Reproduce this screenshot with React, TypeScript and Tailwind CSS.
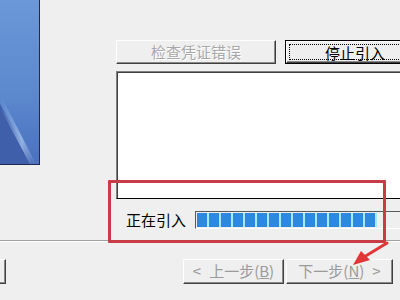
import React from "react";

const font = { fontFamily: '"Noto Sans CJK SC", "Noto Sans", sans-serif' };

function WinButton({ children, className = "" }: { children?: React.ReactNode; className?: string }) {
    return <div className={"flex items-center justify-center whitespace-nowrap bg-[#efefef] border border-t-white border-l-white border-r-[#404040] border-b-[#404040] shadow-[inset_-1px_-1px_0_#8a8a8a] " + className}>
        {children}
    </div>;
}

function SideArt() {
    return <svg width="40" height="165" viewBox="0 0 40 165" className="shrink-0 block">
        <defs>
            <linearGradient id="sky" x1="0" y1="0" x2="0" y2="1">
                <stop offset="0" stopColor="#6b98d8" />
                <stop offset="0.6" stopColor="#5b87cd" />
                <stop offset="1" stopColor="#4a70bf" />
            </linearGradient>
            <linearGradient id="glow" x1="0" y1="0" x2="1" y2="0">
                <stop offset="0" stopColor="#9fbfea" stopOpacity="0" />
                <stop offset="0.6" stopColor="#a9c6ee" stopOpacity="0.75" />
                <stop offset="1" stopColor="#9fbfea" stopOpacity="0" />
            </linearGradient>
        </defs>
        <rect width="40" height="165" fill="url(#sky)" />
        <polygon points="0,104 34,164 0,164" fill="#3f5fab" />
        <polygon points="0,92 2,98 36,164 30,164 0,108" fill="url(#glow)" />
        <rect x="39" y="0" width="1" height="165" fill="#1e2a55" />
        <rect x="0" y="164" width="40" height="1" fill="#1e2a55" />
    </svg>;
}

function Progress() {
    const blocks = Array.from({ length: 15 });
    return <div className="h-[18px] w-[220px] shrink-0 border border-t-[#5a5a5a] border-l-[#5a5a5a] border-b-white border-r-white bg-[#efefef] flex items-center gap-[2px] px-[1px]">
        {blocks.map((_, i) => <div key={i} className="w-[10px] h-[14px] bg-[#2d88e0] shadow-[2px_0_0_#a6e6f6]" />)}
    </div>;
}

export default function App() {
    return <div style={font} className="relative w-[400px] h-[300px] overflow-hidden bg-[#efefef] flex flex-col">
        <div className="h-[240px] flex flex-row shrink-0">
            <SideArt />
            <div className="ml-[76px] pt-[40px] flex flex-col shrink-0">
                <div className="flex flex-row gap-[9px]">
                    <WinButton className="w-[160px] h-[24px] text-[15px] text-[#a8a8a8] [text-shadow:1px_1px_0_#ffffff]">检查凭证错误</WinButton>
                    <div className="w-[140px] h-[24px] border border-black shrink-0">
                        <WinButton className="w-full h-full p-[2px]">
                            <div className="w-full h-full border border-dotted border-black flex items-center justify-center text-[15px] text-black leading-none">停止引入</div>
                        </WinButton>
                    </div>
                </div>
                <div className="mt-[7px] h-[128px] w-[300px] bg-white border border-t-[#808080] border-l-[#808080] shadow-[inset_1px_1px_0_#404040]" />
                <div className="mt-[12px] flex flex-row items-center">
                    <span className="ml-[10px] w-[69px] text-[15px] text-black leading-[18px] whitespace-nowrap">正在引入</span>
                    <Progress />
                </div>
            </div>
        </div>
        <div className="h-[2px] border-t border-t-[#a0a0a0] border-b border-b-white shrink-0" />
        <div className="mt-[17px] flex flex-row text-[15px] text-[#9a9a9a]">
            <WinButton className="-ml-[94px] w-[100px] h-[25px] shrink-0" />
            <WinButton className="ml-[177px] w-[101px] h-[25px] shrink-0 gap-[8px]">
                <span>&lt;</span><span>上一步(<span className="underline">B</span>)</span>
            </WinButton>
            <WinButton className="ml-[2px] w-[107px] h-[25px] shrink-0 gap-[8px]">
                <span>下一步(<span className="underline">N</span>)</span><span>&gt;</span>
            </WinButton>
        </div>
        <div className="absolute left-[108px] top-[180px] w-[278px] h-[63px] border-[3px] border-[#c83c46] rounded-[1px]" />
        <svg className="absolute left-[340px] top-[238px]" width="60" height="32" viewBox="0 0 60 32">
            <line x1="47" y1="5" x2="24" y2="19" stroke="#e23636" strokeWidth="3" strokeLinecap="round" />
            <polygon points="13,27 21,13 30,22" fill="#e23636" />
        </svg>
    </div>;
}
